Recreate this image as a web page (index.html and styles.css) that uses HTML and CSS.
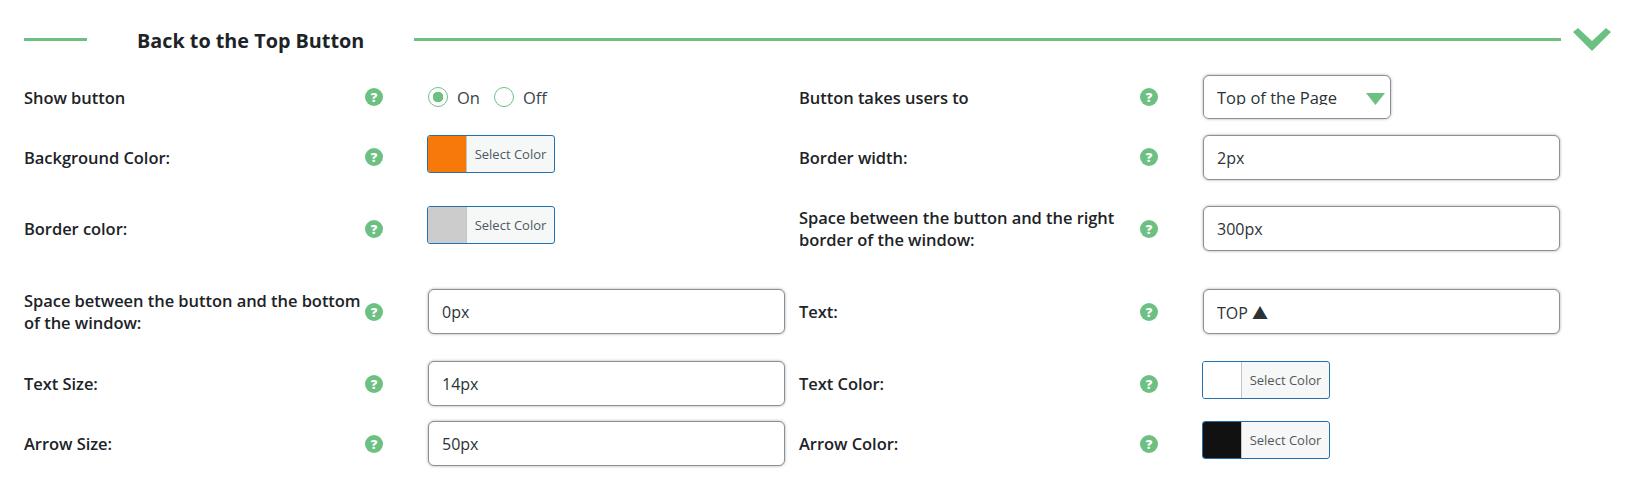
FILE: index.html
```html
<!DOCTYPE html>
<html lang="en">
<head>
    <meta charset="UTF-8">
    <meta name="viewport" content="width=device-width, initial-scale=1.0">
    <title>Back to the Top Button</title>
    <link rel="stylesheet" href="styles.css">
</head>
<body>

<section class="panel">
    <div class="panel-head">
        <span class="head-line head-line-short"></span>
        <h2 class="panel-title">Back to the Top Button</h2>
        <span class="head-line"></span>
        <svg class="chevron" width="38" height="23" viewBox="0 0 38 23">
            <path d="M5 0 L19 13 L33 0 L38 4 L19 23 L0 4 Z" fill="#6cc182"/>
        </svg>
    </div>

    <div class="fields">
        <label class="field-label">Show button</label>
        <span class="help">?</span>
        <div class="radios">
            <input type="radio" name="show" checked><span>On</span>
            <input type="radio" name="show"><span>Off</span>
        </div>

        <label class="field-label">Button takes users to</label>
        <span class="help">?</span>
        <div class="select-wrap">
            <select class="select"><option>Top of the Page</option></select>
            <svg class="select-arrow" width="19" height="12" viewBox="0 0 19 12"><path d="M0 0 H19 L9.5 12 Z" fill="#6cc182"/></svg>
        </div>

        <label class="field-label">Background Color:</label>
        <span class="help">?</span>
        <button class="picker"><span class="swatch swatch-orange"></span><span class="picker-text">Select Color</span></button>

        <label class="field-label">Border width:</label>
        <span class="help">?</span>
        <input class="text-input" type="text" value="2px">

        <label class="field-label">Border color:</label>
        <span class="help">?</span>
        <button class="picker"><span class="swatch swatch-grey"></span><span class="picker-text">Select Color</span></button>

        <label class="field-label">Space between the button and the right border of the window:</label>
        <span class="help">?</span>
        <input class="text-input" type="text" value="300px">

        <label class="field-label">Space between the button and the bottom of the window:</label>
        <span class="help">?</span>
        <input class="text-input" type="text" value="0px">

        <label class="field-label">Text:</label>
        <span class="help">?</span>
        <input class="text-input" type="text" value="TOP ▲">

        <label class="field-label">Text Size:</label>
        <span class="help">?</span>
        <input class="text-input" type="text" value="14px">

        <label class="field-label">Text Color:</label>
        <span class="help">?</span>
        <button class="picker"><span class="swatch swatch-white"></span><span class="picker-text">Select Color</span></button>

        <label class="field-label">Arrow Size:</label>
        <span class="help">?</span>
        <input class="text-input" type="text" value="50px">

        <label class="field-label">Arrow Color:</label>
        <span class="help">?</span>
        <button class="picker"><span class="swatch swatch-black"></span><span class="picker-text">Select Color</span></button>
    </div>
</section>

</body>
</html>
```

FILE: styles.css
```css
body {
    font-family: 'Open Sans', 'Noto Sans', sans-serif;
    background-color: #fff;
    color: #1d2327;
    margin: 0;
    padding: 0;
}

.panel {
    padding: 28px 19px 0 24px;
}

.panel-head {
    display: flex;
    align-items: center;
    height: 23px;
    margin-bottom: 24px;
}

.head-line {
    flex: 1;
    height: 3px;
    background-color: #6cc182;
}

.head-line-short {
    flex: none;
    width: 63px;
}

.panel-title {
    margin: 0 50px;
    padding-top: 2px;
    font-size: 19.8px;
    font-weight: 700;
    white-space: nowrap;
}

.chevron {
    margin-left: 12px;
}

.fields {
    display: grid;
    grid-template-columns: 341px 18px 416px 341px 18px 401px;
    grid-template-rows: 60px 71px 83px 72px 60px 60px;
    align-items: start;
}

.field-label {
    height: 46px;
    display: flex;
    align-items: center;
    font-size: 16.5px;
    font-weight: 600;
    line-height: 22.5px;
    letter-spacing: -0.05px;
}

.help {
    width: 18px;
    height: 18px;
    margin-top: 13px;
    border-radius: 50%;
    background-color: #6cc182;
    color: #fff;
    font-size: 13px;
    font-weight: 800;
    line-height: 18px;
    text-align: center;
}

/* the taller rows sit a pixel lower */
.fields > .help:nth-child(n+13) {
    margin-top: 14px;
}

.text-input,
.select-wrap,
.radios {
    margin-left: 45px;
}

.text-input {
    box-sizing: border-box;
    width: 357px;
    height: 45px;
    padding: 0 13px;
    border: 1px solid #8c8f94;
    border-radius: 6px;
    box-shadow: 0 0 3px rgba(0, 0, 0, 0.35);
    background-color: #fff;
    color: #2c3338;
    font-family: 'Open Sans', 'Noto Sans CJK SC', sans-serif;
    font-size: 16px;
}

.radios {
    display: flex;
    align-items: center;
    height: 44px;
    font-size: 16.5px;
    color: #3c434a;
}

.radios input {
    appearance: none;
    box-sizing: border-box;
    width: 20px;
    height: 20px;
    margin: 0 9px 0 0;
    border: 1px solid #6cc182;
    border-radius: 50%;
    background-color: #fff;
}

.radios input:checked {
    background: radial-gradient(circle, #6cc182 0 5px, #fff 5.5px);
}

.radios span {
    margin-right: 14px;
}

.select-wrap {
    position: relative;
    width: 188px;
    height: 44px;
}

.select {
    appearance: none;
    box-sizing: border-box;
    width: 188px;
    height: 44px;
    padding: 0 35px 0 13px;
    border: 1px solid #8c8f94;
    border-radius: 6px;
    box-shadow: 0 0 3px rgba(0, 0, 0, 0.35);
    background-color: #fff;
    color: #2c3338;
    font-family: inherit;
    font-size: 16.5px;
}

/* the saved value gets cut off under the baseline */
.select-wrap::after {
    content: '';
    position: absolute;
    left: 1px;
    right: 1px;
    bottom: 1px;
    height: 13px;
    border-radius: 0 0 5px 5px;
    background-color: #fff;
}

.select-arrow {
    position: absolute;
    top: 18px;
    right: 6px;
}

.picker {
    display: flex;
    box-sizing: border-box;
    width: 128px;
    height: 38px;
    margin-left: 44px;
    padding: 0;
    border: 1px solid #2271b1;
    border-radius: 3px;
    background-color: #f6f7f7;
    font-family: inherit;
    overflow: hidden;
}

.swatch {
    width: 38px;
    height: 100%;
    border-right: 1px solid #c3c4c7;
}

.swatch-orange {
    background-color: #f7790a;
}

.swatch-grey {
    background-color: #ccc;
}

.swatch-white {
    background-color: #fff;
}

.swatch-black {
    background-color: #111;
}

.picker-text {
    flex: 1;
    font-size: 13px;
    line-height: 36px;
    color: #50575e;
    text-align: center;
}
```
